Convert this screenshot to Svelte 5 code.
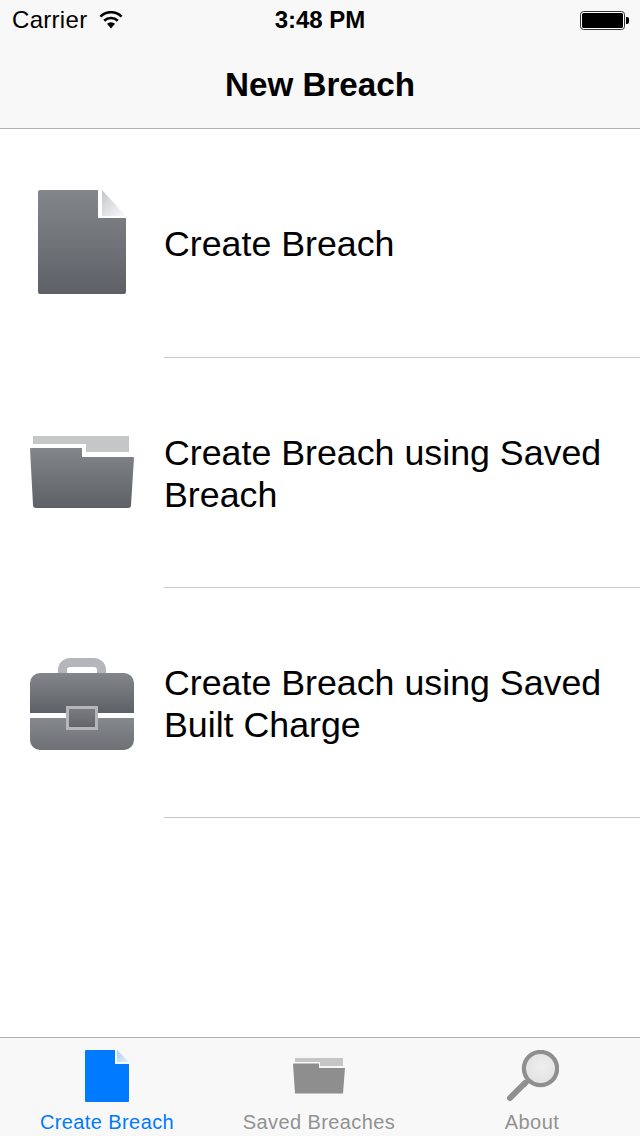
<script>
  const rows = [
    { kind: "doc", lines: ["Create Breach"] },
    { kind: "folder", lines: ["Create Breach using Saved", "Breach"] },
    { kind: "case", lines: ["Create Breach using Saved", "Built Charge"] }
  ];
</script>

<div class="screen">
  <header class="top">
    <div class="status">
      <div class="left">
        <span class="carrier">Carrier</span>
        <svg class="wifi" width="24" height="18" viewBox="0 0 24 18">
          <path d="M12 17.5 L8 12.8 A5.9 5.9 0 0 1 16 12.8 Z" fill="#000" />
          <path d="M5.2 9.8 A9.8 9.8 0 0 1 18.8 9.8" fill="none" stroke="#000" stroke-width="2.6" />
          <path d="M1.4 5.6 A15 15 0 0 1 22.6 5.6" fill="none" stroke="#000" stroke-width="2.6" />
        </svg>
      </div>
      <span class="time">3:48 PM</span>
      <svg class="battery" width="49" height="19" viewBox="0 0 49 19">
        <rect x="0.5" y="0.5" width="44" height="18" rx="3" fill="#fff" stroke="#333" />
        <rect x="2" y="2" width="41" height="15" rx="1.5" fill="#000" />
        <path d="M46 6 h1 a2 2 0 0 1 2 2 v3 a2 2 0 0 1 -2 2 h-1 Z" fill="#000" />
      </svg>
    </div>
    <div class="nav">New Breach</div>
  </header>

  <svg class="defs" width="0" height="0" aria-hidden="true">
    <defs>
      <linearGradient id="body" x1="0" y1="0" x2="0" y2="1">
        <stop offset="0" stop-color="#83868a" />
        <stop offset="1" stop-color="#5d6066" />
      </linearGradient>
      <linearGradient id="lower" x1="0" y1="0" x2="0" y2="1">
        <stop offset="0" stop-color="#85888c" />
        <stop offset="1" stop-color="#6d7074" />
      </linearGradient>
      <linearGradient id="clasp" x1="0" y1="0" x2="0" y2="1">
        <stop offset="0" stop-color="#7b7e82" />
        <stop offset="1" stop-color="#5f6267" />
      </linearGradient>
      <linearGradient id="fold" x1="0" y1="0" x2="1" y2="1">
        <stop offset="0" stop-color="#c4c6ca" />
        <stop offset="1" stop-color="#fbfbfb" />
      </linearGradient>
      <linearGradient id="foldblue" x1="0" y1="0" x2="1" y2="1">
        <stop offset="0" stop-color="#a8cdf4" />
        <stop offset="1" stop-color="#e6f0fb" />
      </linearGradient>
      <radialGradient id="lens" cx="0.55" cy="0.45" r="0.6">
        <stop offset="0" stop-color="#efefef" />
        <stop offset="1" stop-color="#e0e0e0" />
      </radialGradient>
    </defs>
  </svg>

  <main class="list">
    {#each rows as row}
      <div class="row">
        <div class="icon {row.kind}">
          {#if row.kind === "doc"}
            <svg width="88" height="104" viewBox="0 0 88 104">
              <path d="M2 0 H60 V28 H88 V102 A2 2 0 0 1 86 104 H2 A2 2 0 0 1 0 102 V2 A2 2 0 0 1 2 0 Z" fill="url(#body)" />
              <path d="M64 0 L88 26 H64 Z" fill="url(#fold)" />
            </svg>
          {:else if row.kind === "folder"}
            <svg width="104" height="72" viewBox="0 0 104 72">
              <path d="M3 0 H99 V16 H56 V8 H3 Z" fill="#c5c6c8" />
              <path d="M1 12 H52 V21 H103 A1 1 0 0 1 104 22 L101 69 A3 3 0 0 1 98 72 H6 A3 3 0 0 1 3 69 L0 13 A1 1 0 0 1 1 12 Z" fill="url(#body)" />
            </svg>
          {:else}
            <svg width="104" height="92" viewBox="0 0 104 92">
              <path d="M32.5 16 V12 A7.5 7.5 0 0 1 40 4.5 H64 A7.5 7.5 0 0 1 71.5 12 V16" fill="none" stroke="#b4b6b9" stroke-width="9" />
              <path d="M10 15 H94 A10 10 0 0 1 104 25 V55 H0 V25 A10 10 0 0 1 10 15 Z" fill="url(#body)" />
              <path d="M0 60 H104 V82 A10 10 0 0 1 94 92 H10 A10 10 0 0 1 0 82 Z" fill="url(#lower)" />
              <rect x="36" y="48" width="32" height="24" fill="url(#clasp)" />
              <rect x="37.5" y="49.5" width="29" height="21" fill="none" stroke="#b4b6b9" stroke-width="3" />
            </svg>
          {/if}
        </div>
        <div class="label">
          {#each row.lines as line}
            <div>{line}</div>
          {/each}
        </div>
      </div>
    {/each}
  </main>

  <nav class="tabs">
    <div class="tab active">
      <svg width="44" height="52" viewBox="0 0 44 52">
        <path d="M1 0 H30 V14 H44 V51 A1 1 0 0 1 43 52 H1 A1 1 0 0 1 0 51 V1 A1 1 0 0 1 1 0 Z" fill="#007aff" />
        <path d="M32 0 L44 12 H32 Z" fill="url(#foldblue)" />
      </svg>
      <span>Create Breach</span>
    </div>
    <div class="tab">
      <svg width="52" height="36" viewBox="0 0 52 36">
        <path d="M2 0 H50 V8 H27 V4 H2 Z" fill="#c6c6c6" />
        <path d="M0.5 5.5 H26 V10 H52 L50 35.5 H2 L0 6 Z" fill="#8e8e8e" />
      </svg>
      <span>Saved Breaches</span>
    </div>
    <div class="tab">
      <svg width="54" height="52" viewBox="0 0 54 52">
        <circle cx="35.5" cy="18.5" r="16.6" fill="url(#lens)" stroke="#8f8f8f" stroke-width="4.2" />
        <path d="M23 31.5 L19 36" stroke="#8f8f8f" stroke-width="3.5" />
        <path d="M20 33 L5 48" stroke="#8f8f8f" stroke-width="6" stroke-linecap="round" />
      </svg>
      <span>About</span>
    </div>
  </nav>
</div>

<style>
  :global(body) {
    margin: 0;
    background: #fff;
  }

  .screen {
    width: 640px;
    height: 1136px;
    display: flex;
    flex-direction: column;
    overflow: hidden;
    background: #fff;
    color: #000;
    font-family: "Liberation Sans", Arial, sans-serif;
  }

  .top {
    height: 128px;
    background: #f8f8f8;
    border-bottom: 1px solid #b2b2b2;
    flex: none;
  }

  .status {
    height: 40px;
    padding: 0 11px 0 12px;
    display: flex;
    align-items: center;
    justify-content: space-between;
    position: relative;
  }

  .left {
    display: flex;
    align-items: center;
    gap: 12px;
  }

  .carrier {
    font-size: 24px;
    letter-spacing: 0.3px;
  }

  .time {
    position: absolute;
    left: 0;
    right: 0;
    text-align: center;
    font-size: 24px;
    font-weight: bold;
  }

  .nav {
    height: 87px;
    padding-top: 1px;
    display: flex;
    align-items: center;
    justify-content: center;
    font-size: 33.2px;
    font-weight: bold;
  }

  .defs {
    position: absolute;
  }

  .list {
    flex: 1;
    margin-top: -1px;
  }

  .row {
    height: 229px;
    display: flex;
    align-items: center;
    position: relative;
  }

  .row + .row {
    margin-top: 1px;
  }

  .row::after {
    content: "";
    position: absolute;
    left: 164px;
    right: 0;
    bottom: -1px;
    height: 1px;
    background: #c8c7cc;
  }

  .icon {
    width: 164px;
    flex: none;
    display: flex;
    justify-content: center;
  }

  .icon svg {
    display: block;
  }

  .doc,
  .folder {
    margin-bottom: 2px;
  }

  .case {
    margin-top: 2px;
  }

  .label {
    font-size: 35.75px;
    line-height: 42px;
    padding-top: 2px;
  }

  .tabs {
    height: 98px;
    flex: none;
    background: #f8f8f8;
    border-top: 1px solid #b2b2b2;
    display: grid;
    grid-template-columns: 214px 210px 216px;
  }

  .tab {
    display: flex;
    flex-direction: column;
    align-items: center;
    justify-content: flex-end;
    position: relative;
    color: #929292;
    font-size: 20px;
    letter-spacing: 0.4px;
  }

  .tab svg {
    position: absolute;
    top: 12px;
  }

  .tab:nth-child(2) svg {
    top: 20px;
  }

  .tab span {
    line-height: 24px;
    margin-bottom: 2px;
  }

  .active {
    color: #007aff;
  }
</style>
